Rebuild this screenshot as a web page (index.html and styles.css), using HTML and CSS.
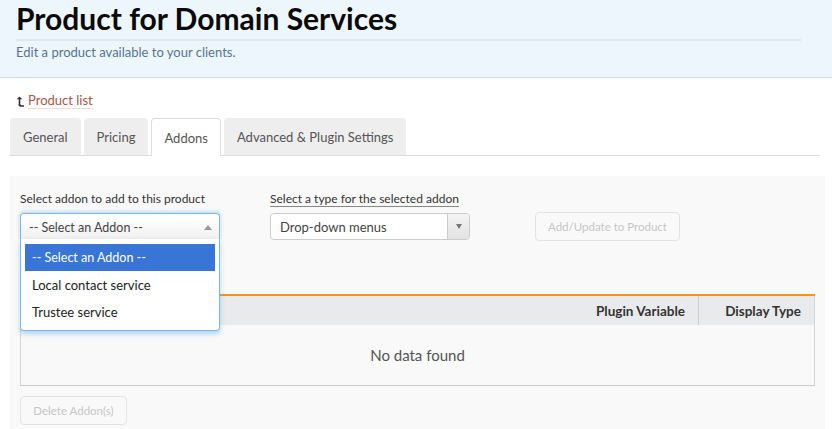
FILE: index.html
```html
<!DOCTYPE html>
<html lang="en">
<head>
<meta charset="utf-8">
<title>Product for Domain Services</title>
<link rel="stylesheet" href="styles.css">
</head>
<body>
<header class="page-header">
  <h1 class="title">Product for Domain Services</h1>
  <p class="subtitle">Edit a product available to your clients.</p>
</header>
<main class="page">
  <div class="back-row">
    <svg class="back-icon" width="9" height="11" viewBox="0 0 9 11" aria-hidden="true">
      <path d="M3.5 10 V2.2" stroke="#333" stroke-width="1.6" fill="none"/>
      <path d="M0.6 3.2 L3.5 0.4 L6.4 3.2 Z" fill="#333"/>
      <path d="M3.5 8.2 Q3.5 10 5.4 10 H8" stroke="#333" stroke-width="1.6" fill="none"/>
    </svg>
    <a class="back-link" href="#">Product list</a>
  </div>
  <nav class="tabs">
    <a class="tab" href="#">General</a>
    <a class="tab" href="#">Pricing</a>
    <a class="tab active" href="#">Addons</a>
    <a class="tab" href="#">Advanced &amp; Plugin Settings</a>
  </nav>
  <section class="panel">
    <div class="form-row">
      <div class="field field-addon">
        <label class="label">Select addon to add to this product</label>
        <div class="chosen">
          <div class="chosen-single">
            <span>-- Select an Addon --</span>
            <span class="arrow-up"></span>
          </div>
          <ul class="chosen-list">
            <li class="opt highlighted">-- Select an Addon --</li>
            <li class="opt">Local contact service</li>
            <li class="opt">Trustee service</li>
          </ul>
        </div>
      </div>
      <div class="field field-type">
        <label class="label label-underline">Select a type for the selected addon</label>
        <div class="select">
          <span class="select-text">Drop-down menus</span>
          <span class="select-btn"><span class="arrow-down"></span></span>
        </div>
      </div>
      <button class="btn btn-add" disabled>Add/Update to Product</button>
    </div>
    <table class="grid">
      <thead>
        <tr>
          <th class="col-main"></th>
          <th class="col-var">Plugin Variable</th>
          <th class="col-type">Display Type</th>
        </tr>
      </thead>
      <tbody>
        <tr>
          <td class="empty" colspan="3">No data found</td>
        </tr>
      </tbody>
    </table>
    <button class="btn btn-delete" disabled>Delete Addon(s)</button>
  </section>
</main>
</body>
</html>
```
FILE: styles.css
```css
* { box-sizing: border-box; }
html, body { margin: 0; padding: 0; }
body {
  font-family: Lato, "Open Sans", "Liberation Sans", sans-serif;
  color: #333;
  background: #fff;
  width: 832px;
  height: 429px;
  overflow: hidden;
}

.page-header {
  background: #eef6fd;
  border-bottom: 1px solid #c3dce9;
  height: 78px;
  padding: 1px 31px 0 16px;
}
.title {
  margin: 0;
  font-size: 30px;
  line-height: 35px;
  font-weight: 700;
  color: #0a0a0a;
  padding-bottom: 3px;
  border-bottom: 2px solid #dbe8f1;
}
.subtitle {
  margin: 4px 0 0;
  font-size: 13px;
  line-height: 1.2;
  color: #557592;
}

.page {
  padding: 0 7px 0 10px;
}
.back-row {
  display: flex;
  align-items: center;
  gap: 3px;
  margin-top: 15px;
  padding-left: 6px;
  height: 16px;
}
.back-icon { display: block; }
.back-link {
  font-size: 13px;
  line-height: 1.2;
  color: #a4574a;
  text-decoration: none;
  border-bottom: 1px solid #f2dcd2;
}

.tabs {
  display: flex;
  gap: 3px;
  margin-top: 9px;
  margin-right: 5px;
  border-bottom: 1px solid #dddddd;
  height: 38px;
}
.tab {
  display: flex;
  align-items: center;
  height: 37px;
  padding: 0 13px;
  background: #eeeeee;
  border-radius: 4px 4px 0 0;
  font-size: 13px;
  color: #555;
  text-decoration: none;
}
.tab.active {
  background: #fff;
  border: 1px solid #dddddd;
  border-bottom: none;
  height: 38px;
  padding: 0 12px;
}

.panel {
  margin-top: 20px;
  background: #f9f9f9;
  padding: 16px 10px 20px 10px;
  height: 260px;
}
.form-row {
  display: flex;
  align-items: flex-start;
  height: 102px;
}
.field {
  width: 200px;
  display: flex;
  flex-direction: column;
  align-items: flex-start;
}
.field-type { margin-left: 50px; }
.label {
  font-size: 12px;
  line-height: 1.2;
  color: #333;
  margin-bottom: 7px;
}
.label-underline {
  border-bottom: 1px solid #888;
  margin-bottom: 6px;
}

.chosen {
  position: relative;
  width: 200px;
  height: 27px;
}
.chosen-single {
  height: 27px;
  border: 1px solid #7fb6ea;
  border-bottom: none;
  border-radius: 4px 4px 0 0;
  background: linear-gradient(#ffffff 20%, #eeeeee 100%);
  display: flex;
  align-items: center;
  justify-content: space-between;
  padding: 0 7px 0 8px;
  font-size: 12.5px;
  color: #444;
  box-shadow: 0 -1px 4px rgba(82, 168, 236, 0.45);
}
.arrow-up {
  width: 0; height: 0;
  border-left: 4px solid transparent;
  border-right: 4px solid transparent;
  border-bottom: 5px solid #999;
}
.chosen-list {
  position: absolute;
  top: 26px;
  left: 0;
  z-index: 5;
  width: 200px;
  margin: 0;
  padding: 5px 4px 5px 4px;
  list-style: none;
  background: #fff;
  border: 1px solid #7fb6ea;
  border-top: none;
  border-radius: 0 0 4px 4px;
  box-shadow: 0 3px 5px rgba(82, 168, 236, 0.45);
}
.opt {
  height: 27px;
  display: flex;
  align-items: center;
  padding-left: 7px;
  font-size: 13px;
  color: #222;
}
.opt.highlighted {
  background: #3875d7;
  color: #fff;
  font-size: 12.5px;
  height: 27px;
}

.select {
  width: 200px;
  height: 27px;
  border: 1px solid #cccccc;
  border-radius: 4px;
  background: #fff;
  display: flex;
  align-items: stretch;
}
.select-text {
  flex: 1;
  display: flex;
  align-items: center;
  padding-left: 9px;
  font-size: 13px;
  color: #444;
}
.select-btn {
  width: 22px;
  border-left: 1px solid #cccccc;
  background: linear-gradient(#f4f4f4, #e2e2e2);
  border-radius: 0 3px 3px 0;
  display: flex;
  align-items: center;
  justify-content: center;
}
.arrow-down {
  width: 0; height: 0;
  border-left: 3.5px solid transparent;
  border-right: 3.5px solid transparent;
  border-top: 5px solid #777;
}

.btn {
  font-family: inherit;
  background: #f9f9f9;
  border: 1px solid #e3e3e3;
  border-radius: 4px;
  color: #c6c6c6;
  font-size: 11.5px;
  padding: 0;
}
.btn-add {
  margin-left: 65px;
  margin-top: 20px;
  width: 145px;
  height: 29px;
}

.grid {
  width: 795px;
  border-collapse: collapse;
  border-top: 2px solid #f7930f;
  border-left: 1px solid #d6d6d6;
  border-right: 1px solid #d6d6d6;
  border-bottom: 1px solid #cccccc;
  font-size: 13.5px;
}
.grid th {
  background: #e9eaec;
  height: 30px;
  padding: 0 13px 0 0;
  text-align: right;
  font-weight: 700;
  color: #333;
}
.col-var { border-right: 1px solid #cfcfcf; }
.col-type { width: 116px; }
.empty {
  height: 60px;
  text-align: center;
  font-size: 15px;
  color: #555;
  background: #f9f9f9;
}
.btn-delete {
  margin-top: 10px;
  width: 107px;
  height: 29px;
}
```
